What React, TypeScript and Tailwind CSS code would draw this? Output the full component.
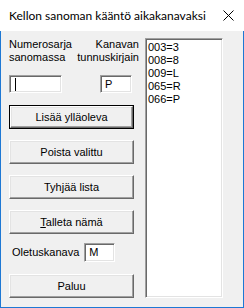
const sunken =
  "bg-white border border-t-[#a0a0a0] border-l-[#a0a0a0] border-b-white border-r-white shadow-[inset_1px_1px_0_#696969,inset_-1px_-1px_0_#e3e3e3]"

const raised =
  "bg-[#f0f0f0] border border-t-white border-l-white border-b-[#696969] border-r-[#696969] shadow-[inset_-1px_-1px_0_#a0a0a0,inset_1px_1px_0_#e3e3e3]"

const Button = ({ children, isDefault = false }: { children: React.ReactNode; isDefault?: boolean }) => (
  <div className={isDefault ? "w-[125px] h-[24px] border border-black" : "w-[125px] h-[24px]"}>
    <div className={`${raised} w-full h-full flex items-center justify-center text-black`}>
      {children}
    </div>
  </div>
)

const items = ["003=3", "008=8", "009=L", "065=R", "066=P"]

const App = () => {
  return (
    <div className="w-[244px] h-[308px] bg-[#f0f0f0] flex flex-col font-['Liberation_Sans',Arial,sans-serif] text-[11px] leading-[13px] text-black">
      <div className="h-[31px] bg-white flex items-center pl-[9px] pr-[10px] shrink-0">
        <span className="font-['Lato',sans-serif] text-[12px] leading-[16px] text-black">
          Kellon sanoman kääntö aikakanavaksi
        </span>
        <svg width="11" height="11" viewBox="0 0 11 11" className="ml-auto mb-[1px]">
          <path d="M0.5 0.5 L10.5 10.5 M10.5 0.5 L0.5 10.5" stroke="#000" strokeWidth="1" />
        </svg>
      </div>

      <div className="flex-1 flex border-x border-b border-[#1e78d4] pl-[8px] pt-[7px]">
        <div className="w-[136px] flex flex-col">
          <div className="w-[130px] flex justify-between">
            <div>
              Numerosarja
              <br />
              sanomassa
            </div>
            <div className="text-right">
              Kanavan
              <br />
              tunnuskirjain
            </div>
          </div>

          <div className="flex mt-[11px]">
            <div className={`${sunken} w-[53px] h-[18px] flex items-center pl-[5px]`}>
              <span className="w-px h-[13px] bg-black" />
            </div>
            <div className={`${sunken} w-[32px] h-[18px] ml-[38px] flex items-center pl-[4px]`}>P</div>
          </div>

          <div className="flex flex-col gap-[11px] mt-[12px]">
            <Button isDefault>Lisää ylläoleva</Button>
            <Button>Poista valittu</Button>
            <Button>Tyhjää lista</Button>
            <Button>
              <span>
                <u>T</u>alleta nämä
              </span>
            </Button>
          </div>

          <div className="flex items-center mt-[9px] pl-[3px]">
            <span>Oletuskanava</span>
            <div className={`${sunken} w-[31px] h-[19px] ml-[5px] flex items-center pl-[4px]`}>M</div>
          </div>

          <div className="mt-[12px]">
            <Button>Paluu</Button>
          </div>
        </div>

        <div className="w-[78px] h-[260px] bg-white border border-t-[#a0a0a0] border-l-[#a0a0a0] border-b-white border-r-white shadow-[inset_1px_1px_0_#696969,inset_-1px_-1px_0_#e3e3e3] pl-[2px] pt-[2px]">
          {items.map(item => (
            <div key={item} className="h-[13px]">
              {item}
            </div>
          ))}
        </div>
      </div>
    </div>
  )
}

export default App
